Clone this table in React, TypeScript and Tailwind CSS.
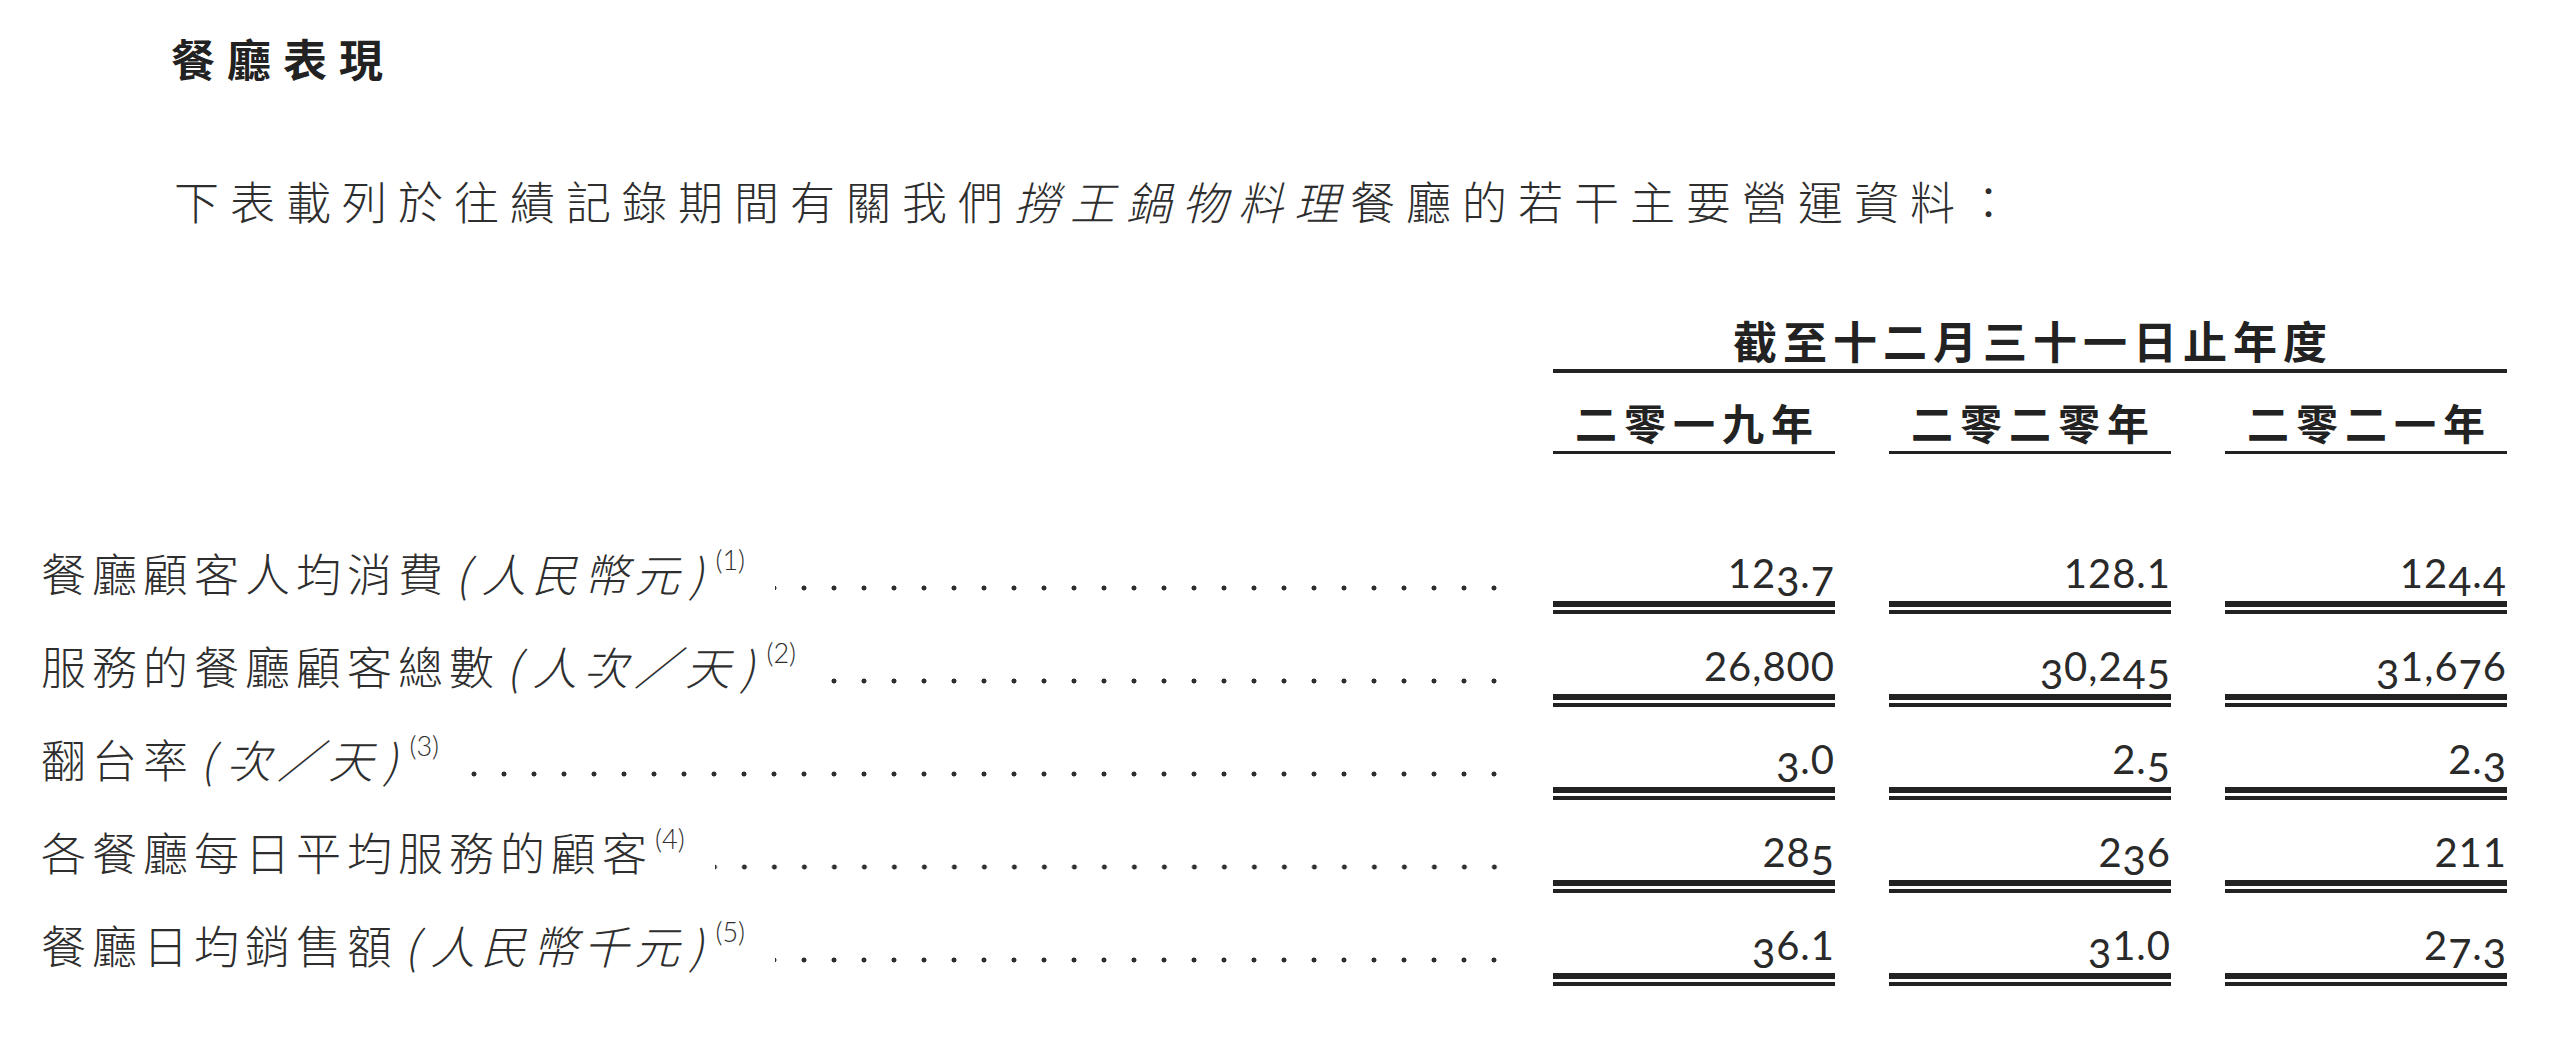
import React from "react"

type Row = {
  label: string
  paren: string
  note: string
  values: string[]
}

const rows: Row[] = [
  { label: "餐廳顧客人均消費", paren: "人民幣元", note: "1", values: ["123.7", "128.1", "124.4"] },
  { label: "服務的餐廳顧客總數", paren: "人次／天", note: "2", values: ["26,800", "30,245", "31,676"] },
  { label: "翻台率", paren: "次／天", note: "3", values: ["3.0", "2.5", "2.3"] },
  { label: "各餐廳每日平均服務的顧客", paren: "", note: "4", values: ["285", "236", "211"] },
  { label: "餐廳日均銷售額", paren: "人民幣千元", note: "5", values: ["36.1", "31.0", "27.3"] },
]

const years = ["二零一九年", "二零二零年", "二零二一年"]

// old-style figures: these digits hang below the baseline
const hanging = "34579"

function Figure({ value }: { value: string }) {
  return (
    <>
      {value.split("").map((ch, i) =>
        hanging.includes(ch) ? (
          <span key={i} className="inline-block translate-y-[8px]">
            {ch}
          </span>
        ) : (
          <span key={i}>{ch}</span>
        )
      )}
    </>
  )
}

function ValueCell({ value, first }: { value: string; first?: boolean }) {
  return (
    <div className={`flex w-[282px] flex-col ${first ? "" : "ml-[54px]"}`}>
      <div className="text-right font-['Lato',sans-serif] text-[40px] leading-none tracking-[1px] text-[#2a2a2a]">
        <Figure value={value} />
      </div>
      <div className="mt-[8px] h-[6px] bg-[#222]" />
      <div className="mt-[3px] h-[4px] bg-[#222]" />
    </div>
  )
}

export default function App() {
  return (
    <div className="min-h-screen bg-white font-['Noto_Sans_CJK_TC','Noto_Sans_CJK_SC',sans-serif] text-[#2e2e2e]">
      <h2 className="ml-[171px] pt-[36px] text-[44px] leading-none font-bold tracking-[12px] text-[#222]">
        餐廳表現
      </h2>

      <p className="ml-[174px] mt-[98px] text-[45px] leading-none font-light tracking-[11px] whitespace-nowrap">
        下表載列於往績記錄期間有關我們<span className="italic">撈王鍋物料理</span>餐廳的若干主要營運資料：
      </p>

      <div className="mt-[95px] pl-[41px] pr-[53px]">
        {/* period header */}
        <div className="flex">
          <div className="flex-1" />
          <div className="w-[954px] border-b-[4px] border-[#222] pb-[7px] pl-[6px] text-center text-[44px] leading-none font-bold tracking-[6px] text-[#222]">
            截至十二月三十一日止年度
          </div>
        </div>

        {/* year header */}
        <div className="mt-[28px] flex">
          <div className="flex-1" />
          {years.map((y, i) => (
            <div
              key={y}
              className={`w-[282px] border-b-[3px] border-[#222] pb-[8px] pl-[7px] text-center text-[42px] leading-none font-bold tracking-[7px] text-[#222] ${i === 0 ? "" : "ml-[54px]"}`}
            >
              {y}
            </div>
          ))}
        </div>

        {/* data rows */}
        <div className="mt-[67px]">
          {rows.map((r) => (
            <div key={r.note} className="flex h-[93px] items-end">
              <div className="mr-[44px] flex flex-1 items-end pb-[19px]">
                <div className="flex items-start whitespace-nowrap">
                  <span className="text-[45px] leading-none font-light tracking-[6px]">
                    {r.label}
                    {r.paren && (
                      <span className="italic">
                        <span className="mx-[6px]">(</span>
                        {r.paren}
                        <span className="mx-[4px]">)</span>
                      </span>
                    )}
                  </span>
                  <span className="ml-[2px] -mt-[4px] font-['Lato',sans-serif] text-[27px] leading-none font-light">
                    ({r.note})
                  </span>
                </div>
                <div className="mb-[4px] ml-[30px] h-[6px] flex-1 bg-[radial-gradient(circle,#2e2e2e_2.2px,transparent_2.8px)] bg-[length:30px_6px] bg-right bg-repeat-x" />
              </div>
              {r.values.map((v, i) => (
                <ValueCell key={i} value={v} first={i === 0} />
              ))}
            </div>
          ))}
        </div>
      </div>
    </div>
  )
}
